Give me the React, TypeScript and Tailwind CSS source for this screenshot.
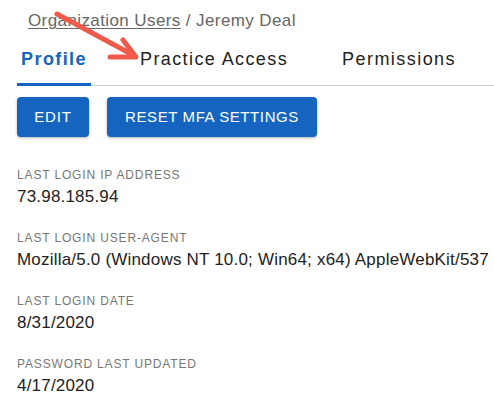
import React from "react";

const fields = [
  { label: "LAST LOGIN IP ADDRESS", value: "73.98.185.94" },
  {
    label: "LAST LOGIN USER-AGENT",
    value: "Mozilla/5.0 (Windows NT 10.0; Win64; x64) AppleWebKit/537",
  },
  { label: "LAST LOGIN DATE", value: "8/31/2020" },
  { label: "PASSWORD LAST UPDATED", value: "4/17/2020" },
];

export default function App() {
  return (
    <div
      className="relative w-[494px] h-[409px] overflow-hidden bg-white"
      style={{ fontFamily: '"Liberation Sans", Arial, sans-serif' }}
    >
      <div className="pl-[28px] pt-[11px] text-[17px] leading-[20px] tracking-[0.4px] text-[#666] whitespace-nowrap">
        <span className="underline decoration-[1px] underline-offset-[2px]">Organization Users</span>
        <span> / Jeremy Deal</span>
      </div>

      <div className="ml-[17px] flex border-b border-[#cfcfcf] text-[18px] leading-[24px] whitespace-nowrap">
        <div className="-mb-px w-[74px] pt-[16px] pb-[12px] border-b-[3px] border-[#1565c0] text-center font-bold text-[#1565c0] tracking-[1.4px]">
          Profile
        </div>
        <div className="-mb-px ml-[49px] pt-[16px] pb-[12px] border-b-[3px] border-transparent text-[#222] tracking-[1.4px]">
          Practice Access
        </div>
        <div className="-mb-px ml-[54px] pt-[16px] pb-[12px] border-b-[3px] border-transparent text-[#222] tracking-[1.45px]">
          Permissions
        </div>
      </div>

      <div className="ml-[17px] mt-[11px] flex gap-[18px]">
        <button className="flex h-[40px] w-[72px] items-center justify-center rounded-[4px] bg-[#1565c0] text-[15px] tracking-[0.8px] text-white shadow-[0_1px_3px_rgba(0,0,0,0.3)]">
          EDIT
        </button>
        <button className="flex h-[40px] w-[210px] items-center justify-center rounded-[4px] bg-[#1565c0] text-[15px] tracking-[0.6px] text-white shadow-[0_1px_3px_rgba(0,0,0,0.3)]">
          RESET MFA SETTINGS
        </button>
      </div>

      <div className="ml-[17px] mt-[30px] flex flex-col gap-[21px]">
        {fields.map((f) => (
          <div key={f.label} className="flex flex-col">
            <div className="text-[12px] leading-[16px] text-[#777] tracking-[0.85px]">{f.label}</div>
            <div className="mt-[2px] text-[17px] leading-[24px] text-[#222] tracking-[0.2px] whitespace-nowrap">
              {f.value}
            </div>
          </div>
        ))}
      </div>

      <svg
        className="pointer-events-none absolute left-0 top-0"
        width="494"
        height="409"
        viewBox="0 0 494 409"
      >
        <g stroke="#ef5a4b" strokeWidth="5" strokeLinecap="round" strokeLinejoin="round" fill="none">
          <line x1="57" y1="14" x2="133" y2="55" />
          <polyline points="123,40 136,57 110,57" />
        </g>
      </svg>
    </div>
  );
}
